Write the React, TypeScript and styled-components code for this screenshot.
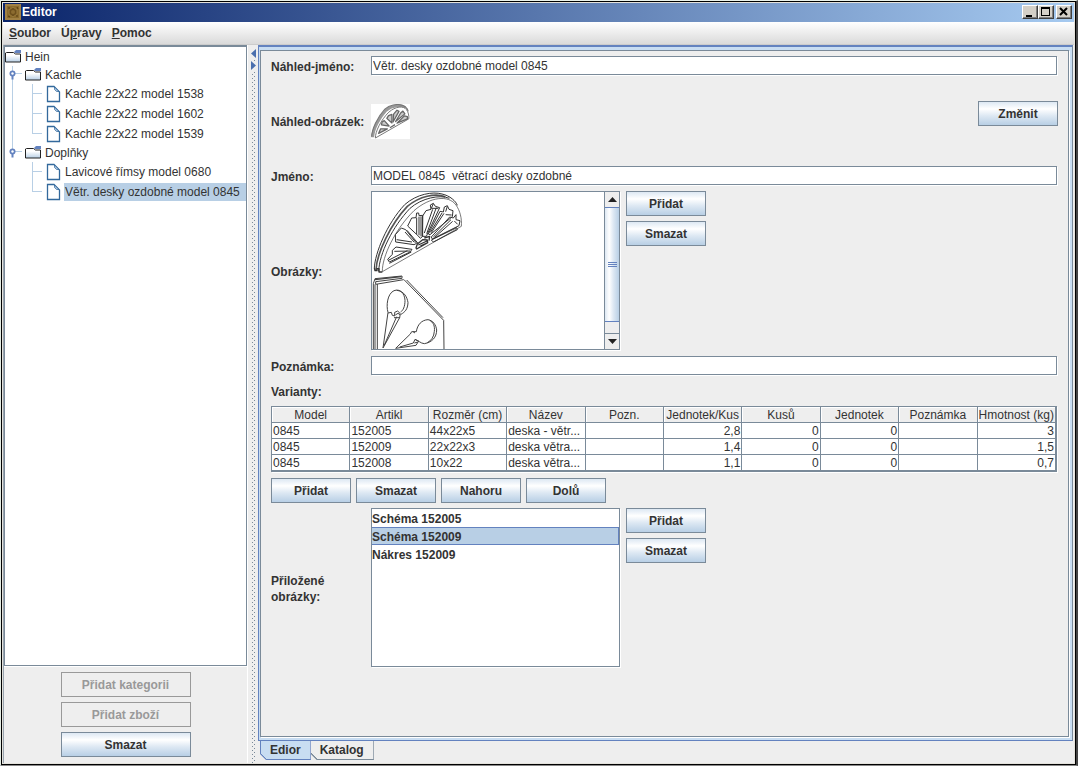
import React, { useState } from "react";
import styled, { createGlobalStyle, css } from "styled-components";

const steel = "#7a8a99";
const blue = "#6382bf";
const pale = "#c8ddf2";
const select = "#b8cfe5";
const panel = "#eeeeee";

const GlobalStyle = createGlobalStyle`
  * { box-sizing: border-box; }
  body { margin: 0; background: ${panel}; }
  body, button, input, table {
    font-family: "Liberation Sans", Arial, sans-serif;
    font-size: 12px;
    line-height: 16px;
    color: #333;
  }
`;

const Desktop = styled.div`
  display: flex;
  min-height: 100vh;
  border-style: solid;
  border-width: 1px 2px 1px 1px;
  border-color: #eaf2ea #444 #888 #e4ece4;
`;

const Window = styled.div`
  flex: 1;
  min-width: 0;
  display: flex;
  flex-direction: column;
  border: 1px solid #000;
  padding: 1px;
  background: #e4e2dc;
`;

const TitleBar = styled.header`
  display: flex;
  align-items: center;
  height: 19px;
  padding: 0 2px 1px;
  background: linear-gradient(90deg, #0a246a, #a6caf0);
  color: #fff;
  font-weight: bold;
`;

const Title = styled.h1`
  flex: 1;
  margin: 0 0 0 1px;
  font-size: 12px;
`;

const CaptionButton = styled.button<{ $apart?: boolean }>`
  display: flex;
  width: 16px;
  height: 14px;
  padding: 0;
  margin-left: ${(p) => (p.$apart ? "2px" : "0")};
  border: 1px solid;
  border-color: #fff #404040 #404040 #fff;
  box-shadow: inset -1px -1px 0 #808080;
  background: #d4d0c8;
`;

const MenuBar = styled.nav`
  display: flex;
  height: 23px;
  padding: 0 1px 1px;
  border-bottom: 1px solid #ccc;
  background: linear-gradient(#fff, #dadada);
`;

const MenuButton = styled.button`
  border: 0;
  padding: 0 5px;
  background: none;
  font-weight: bold;
`;

const Body = styled.main`
  flex: 1;
  display: grid;
  grid-template-columns: 245px 9px minmax(0, 1fr);
  background: ${panel};
`;

const Side = styled.aside`
  display: flex;
  flex-direction: column;
  border-left: 1px solid #99a5b0;
  border-right: 1px solid #fff;
`;

const TreeBox = styled.div`
  flex: 1;
  padding-top: 1px;
  border: 1px solid ${steel};
  border-top-width: 2px;
  box-shadow: 0 1px 0 #fff;
  background: #fff;
`;

const TreeList = styled.ul`
  list-style: none;
  margin: 0;
  padding: 0;
`;

const TreeRow = styled.div<{ $leaf?: boolean }>`
  display: flex;
  align-items: center;
  height: ${(p) => (p.$leaf ? "20px" : "18px")};
  svg { flex: none; }
`;

const TreeLabel = styled.span<{ $selected?: boolean }>`
  flex: ${(p) => (p.$selected ? "1" : "none")};
  margin-left: 3px;
  padding-left: 1px;
  line-height: 18px;
  white-space: nowrap;
  background: ${(p) => (p.$selected ? select : "transparent")};
`;

const SideActions = styled.div`
  display: flex;
  flex-direction: column;
  align-items: center;
  gap: 5px;
  padding: 6px 0;
`;

const Button = styled.button<{ $wide?: boolean }>`
  width: ${(p) => (p.$wide ? "130px" : "80px")};
  height: 25px;
  padding: 0;
  border: 1px solid ${steel};
  background: linear-gradient(#dde8f3, #fff 30%, #dde8f3 60%, ${select});
  font-weight: bold;
  &:disabled {
    border-color: #999;
    background: ${panel};
    color: #999;
  }
`;

const dot = "conic-gradient(from 270deg at 1px 1px, #7a8a99 90deg, transparent 0)";
const Splitter = styled.div`
  display: flex;
  flex-direction: column;
  align-items: center;
  gap: 2px;
  padding: 4px 2px 0 4px;
  background-image: ${dot}, ${dot};
  background-size: 4px 4px;
  background-position: 0 1px, 2px 3px;
  background-clip: content-box;
`;

const SplitButton = styled.button`
  flex: none;
  display: flex;
  width: 5px;
  height: 10px;
  padding: 0;
  border: 0;
  background: ${panel};
`;

const Content = styled.section`
  display: flex;
  flex-direction: column;
  min-width: 0;
  padding-left: 1px;
  padding-right: 1px;
`;

const TabFrame = styled.div`
  flex: 1;
  display: flex;
  padding: 3px 3px 3px 1px;
  border: 1px solid ${blue};
  border-top-width: 2px;
  border-right-color: ${steel};
  background: ${pale};
`;

const Form = styled.form`
  flex: 1;
  min-width: 0;
  padding: 5px 10px;
  border: 1px solid ${steel};
  box-shadow: 1px 1px 0 #fff;
  background: ${panel};
`;

const Row = styled.div<{ $height?: number; $gap?: number }>`
  display: grid;
  grid-template-columns: 100px minmax(0, 1fr);
  align-items: center;
  min-height: ${(p) => p.$height ?? 20}px;
  margin-bottom: ${(p) => p.$gap ?? 0}px;
`;

const labelText = css`
  padding-top: 2px;
  font-weight: bold;
  white-space: pre-line;
`;
const Label = styled.label`${labelText}`;
const Caption = styled.span`${labelText}`;

const Field = styled.input`
  width: calc(100% - 1px);
  height: 19px;
  margin-bottom: 1px;
  padding: 1px 1px 0;
  border: 1px solid ${steel};
  border-radius: 0;
  box-shadow: 1px 1px 0 #fff;
  background: #fff;
  outline: 0;
`;

const Spread = styled.div`
  display: flex;
  justify-content: space-between;
  align-items: flex-start;
  min-height: 40px;
`;

const Thumb = styled.div`
  display: flex;
  margin-top: 3px;
  background: #fff;
`;

const Listing = styled.div`
  display: flex;
  align-items: flex-start;
  gap: 6px;
`;

const ListBox = styled.div`
  display: flex;
  width: 249px;
  height: 159px;
  margin-bottom: 1px;
  border: 1px solid ${steel};
  box-shadow: 1px 1px 0 #fff;
  background: #fff;
`;

const Pictures = styled.div`
  flex: 1;
  svg { display: block; }
`;

const Stack = styled.div`
  display: flex;
  flex-direction: column;
  gap: 5px;
`;

const ScrollBar = styled.div`
  display: flex;
  flex-direction: column;
  width: 15px;
  border-left: 1px solid ${steel};
  background: ${panel};
`;

const ScrollButton = styled.button`
  display: flex;
  align-items: center;
  justify-content: center;
  height: 15px;
  padding: 0;
  border: 0;
  background: ${panel};
`;

const ScrollTrack = styled.div`
  flex: 1;
  padding-bottom: 11px;
  border-bottom: 1px solid ${steel};
  display: flex;
`;

const ScrollThumb = styled.div`
  flex: 1;
  display: flex;
  align-items: center;
  justify-content: center;
  border: 1px solid ${blue};
  border-width: 1px 0;
  background: linear-gradient(90deg, #dde8f3, #fff 30%, #dde8f3 60%, ${select});
`;

const Options = styled.ul`
  flex: 1;
  list-style: none;
  margin: 0;
  padding: 0;
  font-weight: bold;
`;

const Option = styled.li<{ $selected: boolean }>`
  height: 18px;
  padding-top: 1px;
  border: 1px solid ${(p) => (p.$selected ? blue : "transparent")};
  border-left-width: 0;
  background: ${(p) => (p.$selected ? select : "transparent")};
`;

const Heading = styled.h2`
  margin: 0;
  padding-top: 2px;
  font-size: 12px;
  line-height: 28px;
`;

const Table = styled.table`
  width: calc(100% - 1px);
  table-layout: fixed;
  border-collapse: separate;
  border-spacing: 0;
  border: 1px solid ${steel};
  box-shadow: 1px 1px 0 #fff;
  background: #fff;
`;

const HeadCell = styled.th`
  height: 16px;
  padding: 1px 0 0;
  overflow: hidden;
  border-right: 1px solid ${steel};
  border-bottom: 1px solid ${steel};
  background: ${panel};
  box-shadow: inset 1px 1px 0 #fff;
  font-weight: normal;
  line-height: 14px;
  text-align: center;
  white-space: nowrap;
`;

const Cell = styled.td<{ $number: boolean }>`
  height: 16px;
  padding: 1px 1px 0;
  overflow: hidden;
  border-right: 1px solid ${steel};
  border-bottom: 1px solid ${steel};
  line-height: 14px;
  text-align: ${(p) => (p.$number ? "right" : "left")};
  white-space: nowrap;
`;

const ButtonRow = styled.div`
  display: flex;
  gap: 5px;
  padding: 6px 0 5px;
`;

const Tabs = styled.div`
  display: flex;
  height: 22px;
  padding-left: 2px;
`;

const Tab = styled.button<{ $active: boolean }>`
  height: 19px;
  padding: 0 9px;
  border: 1px solid ${(p) => (p.$active ? blue : steel)};
  border-top: 0;
  border-left-width: ${(p) => (p.$active ? "1px" : "0")};
  background: linear-gradient(45deg, ${(p) => (p.$active ? blue : steel)} 5px, ${(p) => (p.$active ? pale : panel)} 5px) border-box;
  clip-path: polygon(0 0, 100% 0, 100% 100%, 6px 100%, 0 calc(100% - 6px));
  font-weight: bold;
`;

const FolderIcon = () => (
  <svg width="16" height="16" viewBox="0 0 16 16" aria-hidden="true">
    <defs>
      <linearGradient id="folder" x1="0" y1="0" x2="0" y2="1">
        <stop offset="0.3" stopColor="#fff" />
        <stop offset="1" stopColor={select} />
      </linearGradient>
    </defs>
    <path d="M.5 13V4L1.500 3.500H8.500L10.500 5H15.500V13Z" fill="url(#folder)" stroke="#222" />
    <path d="M9 3L11 1H16V4H10Z" fill={blue} />
  </svg>
);

const FileIcon = () => (
  <svg width="16" height="18" viewBox="0 0 16 18" aria-hidden="true">
    <path d="M2.500 1.500H9L14.500 7V16.500H2.500Z" fill="#fff" stroke="#33699c" strokeWidth="1.300" />
    <path d="M9.500 2V4.500L11.500 6.500H14L9.500 2Z" fill="#a9c4de" stroke="#33699c" strokeWidth="0.700" />
  </svg>
);

type GuideKind = "handle" | "lastHandle" | "through" | "branch" | "last" | "none";
const Guide = ({ kind, height }: { kind: GuideKind; height: number }) => {
  const mid = height / 2 - 0.5;
  const handle = kind === "handle" || kind === "lastHandle";
  const x = handle || kind === "through" ? 7 : 7;
  const end = kind === "last" || kind === "lastHandle" ? mid : height;
  return (
    <svg width="20" height={height} aria-hidden="true">
      {kind !== "none" && <rect x={x} width="1" height={end + 0.5} fill={select} />}
      {(kind === "branch" || kind === "last") && <rect x={x} y={mid - 0.5} width="10" height="1" fill={select} />}
      {handle && (
        <>
          <rect x="10" y={mid - 1.5} width="7" height="1" fill={select} />
          <path d={`M7.500 ${mid}V${mid + 5}`} stroke={blue} strokeWidth="2" />
          <circle cx="7.500" cy={mid - 1} r="3" fill={blue} />
          <circle cx="7.500" cy={mid - 1} r="1.200" fill="#fff" />
        </>
      )}
    </svg>
  );
};

const FanShapes = () => (
  <g fill="none" stroke="#333" strokeWidth="3" strokeLinejoin="round">
    <path d="M13 234C15 190 50 102 104 44C140 12 188 4 216 12C240 17 258 34 262 46" />
    <path d="M18 240C20 190 62 102 112 49C150 18 195 9 226 20" strokeWidth="5" stroke="#555" />
    <path d="M26 244C28 190 68 110 120 55C155 24 210 13 238 25" />
    <path d="M13 234L15 242L21 242V236L27 236V246H37" strokeWidth="4" />
    <path d="M37 245C36 200 75 118 132 62C180 20 236 14 258 45C270 62 276 85 274 109L37 245Z" fill="#fff" strokeWidth="2" />
    <path d="M53 208L67 193V181L78 171L126 178L120 186L58 216ZM55 211L112 182M58 220L124 186M73 184L120 183" />
    <path d="M77 156L76 134L94 114L107 119L140 160L132 164L77 156ZM105 126L133 157M80 149L126 156M111 121L144 160" />
    <path d="M113 108L125 84L138 83L140 69H146L147 77L158 76V139L151 145L145 138L113 108ZM140 83V132M147 80V136M153 79V139" />
    <path d="M157 139L158 78L168 62L183 58L181 45L190 40L196 49L209 53L169 139ZM188 58L163 129M199 53L170 131M190 41L184 55L205 55" />
    <path d="M175 132L210 64L220 66L223 51L232 47L237 58L249 62L247 80L180 134ZM216 69L181 127M222 70L184 128M227 74L245 75M232 49L227 65" />
    <path d="M184 141L239 81L250 84L258 74V89L270 92L267 107L187 147ZM243 89L190 141M248 94L194 142M253 93L263 103" />
    <path d="M138 174L142 162L158 149L172 150L173 158L140 177ZM145 165L171 153M163 144L179 139L177 152M151 168L174 158" strokeWidth="4" />
    <path d="M184 150L260 113L262 119L190 156Z" />
  </g>
);

const ThumbShapes = () => (
  <g fill="none" stroke="#777" strokeLinejoin="round">
    <path d="M18 240C20 185 62 102 112 49C150 15 215 5 250 30" stroke="#999" strokeWidth="20" />
    <path d="M10 236C12 185 50 98 104 40C140 10 188 4 216 10C240 15 262 30 270 56" strokeWidth="8" />
    <path d="M37 245C36 200 75 118 132 62C180 20 236 14 258 45C270 62 276 85 274 109L37 245Z" fill="#fff" strokeWidth="7" />
    <g fill="#ccc" stroke="#666" strokeWidth="9">
      <path d="M60 212L74 180L122 180Z" />
      <path d="M80 152L84 132L100 122L134 160Z" />
      <path d="M118 106L130 86L154 78V138Z" />
      <path d="M162 132L166 76L190 48L204 56Z" />
      <path d="M180 128L216 68L232 54L246 74Z" />
      <path d="M190 140L242 88L264 94V110Z" />
      <path d="M140 172L176 150" />
    </g>
  </g>
);

const PanelShapes = () => (
  <g fill="none" stroke="#444" strokeWidth="3">
    <path d="M10 232V35L15 20L96 12L96 19L17 29V37L101 23" />
    <path d="M15 23L94 14" strokeWidth="4" />
    <path d="M15 37V232M22 36V232M102 23L221 145L222 232M110 24L219 137" />
    <path d="M54 121C48 101 52 65 72 56C91 49 104 65 105 85C105 105 99 115 92 120M80 55C103 57 112 77 114 92C113 112 105 120 93 127" />
    <path d="M54 121L39 228L89 137L91 125L83 117L74 121V132L67 130L64 121L54 123M43 219L80 134M72 137H90M76 129L84 124L90 128" />
    <path d="M139 179C142 158 155 144 174 143C190 146 198 159 200 174C200 196 186 211 163 215C151 214 146 205 137 204M179 145C190 151 195 162 193 178C192 194 184 206 172 212" />
    <path d="M139 179L125 179L121 186L77 229L138 220L146 207L135 202L130 213L89 225M133 213L144 210M129 179L135 183" />
  </g>
);

type LeafData = { label: string; selected?: boolean };
const groups: { label: string; items: LeafData[] }[] = [
  {
    label: "Kachle",
    items: [
      { label: "Kachle 22x22 model 1538" },
      { label: "Kachle 22x22 model 1602" },
      { label: "Kachle 22x22 model 1539" },
    ],
  },
  {
    label: "Doplňky",
    items: [
      { label: "Lavicové římsy model 0680" },
      { label: "Větr. desky ozdobné model 0845", selected: true },
    ],
  },
];

const columns = ["Model", "Artikl", "Rozměr (cm)", "Název", "Pozn.", "Jednotek/Kus", "Kusů", "Jednotek", "Poznámka", "Hmotnost (kg)"];
const rows = [
  ["0845", "152005", "44x22x5", "deska - větr...", "", "2,8", "0", "0", "", "3"],
  ["0845", "152009", "22x22x3", "deska větra...", "", "1,4", "0", "0", "", "1,5"],
  ["0845", "152008", "10x22", "deska větra...", "", "1,1", "0", "0", "", "0,7"],
];
const attachments = ["Schéma 152005", "Schéma 152009", "Nákres 152009"];

const Tree = () => (
  <TreeBox>
    <TreeList>
      <li>
        <TreeRow><FolderIcon /><TreeLabel>Hein</TreeLabel></TreeRow>
        <TreeList>
          {groups.map((group, g) => {
            const last = g === groups.length - 1;
            return (
              <li key={group.label}>
                <TreeRow>
                  <Guide kind={last ? "lastHandle" : "handle"} height={18} />
                  <FolderIcon />
                  <TreeLabel>{group.label}</TreeLabel>
                </TreeRow>
                <TreeList>
                  {group.items.map((item, i) => (
                    <li key={item.label}>
                      <TreeRow $leaf>
                        <Guide kind={last ? "none" : "through"} height={20} />
                        <Guide kind={i === group.items.length - 1 ? "last" : "branch"} height={20} />
                        <FileIcon />
                        <TreeLabel $selected={item.selected}>{item.label}</TreeLabel>
                      </TreeRow>
                    </li>
                  ))}
                </TreeList>
              </li>
            );
          })}
        </TreeList>
      </li>
    </TreeList>
  </TreeBox>
);

const PictureList = () => (
  <ListBox aria-labelledby="pictures" role="group">
    <Pictures>
      <svg width="96" height="157" viewBox="6 6 288 471" aria-hidden="true">
        <FanShapes />
        <g transform="translate(0 246)"><PanelShapes /></g>
      </svg>
    </Pictures>
    <ScrollBar>
      <ScrollButton type="button" aria-label="Nahoru">
        <svg width="9" height="5"><path d="M0 5L4.500 0L9 5Z" fill="#222" /></svg>
      </ScrollButton>
      <ScrollTrack>
        <ScrollThumb>
          <svg width="9" height="5"><path d="M0 .5H9M0 2.500H9M0 4.500H9" stroke={blue} /></svg>
        </ScrollThumb>
      </ScrollTrack>
      <ScrollButton type="button" aria-label="Dolů">
        <svg width="9" height="5"><path d="M0 0L4.500 5L9 0Z" fill="#222" /></svg>
      </ScrollButton>
    </ScrollBar>
  </ListBox>
);

export default function App() {
  const [chosen, setChosen] = useState(1);
  const [tab, setTab] = useState(0);
  return (
    <>
      <GlobalStyle />
      <Desktop>
        <Window>
          <TitleBar>
            <svg width="16" height="16" viewBox="0 0 16 16" aria-hidden="true">
              <rect width="16" height="16" fill="#8a6a2c" />
              <path d="M1 1H15V15H1Z" fill="none" stroke="#a08044" strokeWidth="2" />
              <path d="M8 3L12 6V10L8 13L4 10V6Z" fill="#6e501d" stroke="#9a7a3c" />
              <circle cx="8" cy="8" r="2" fill="#8c6c30" />
              <path d="M3 4H5M11 12H13M3 12L5 13M12 3L13 5" stroke="#563b12" />
            </svg>
            <Title>Editor</Title>
            <CaptionButton aria-label="Minimalizovat">
              <svg width="14" height="12"><rect x="3" y="9" width="6" height="2" /></svg>
            </CaptionButton>
            <CaptionButton aria-label="Maximalizovat">
              <svg width="14" height="12"><path d="M2 1H11V10H2ZM3 3V9H10V3Z" fillRule="evenodd" /></svg>
            </CaptionButton>
            <CaptionButton aria-label="Zavřít" $apart>
              <svg width="14" height="12"><path d="M3 2L10 9M10 2L3 9" stroke="#000" strokeWidth="2" /></svg>
            </CaptionButton>
          </TitleBar>
          <MenuBar>
            <MenuButton><u>S</u>oubor</MenuButton>
            <MenuButton>Ú<u>p</u>ravy</MenuButton>
            <MenuButton><u>P</u>omoc</MenuButton>
          </MenuBar>
          <Body>
            <Side>
              <Tree />
              <SideActions>
                <Button $wide disabled>Přidat kategorii</Button>
                <Button $wide disabled>Přidat zboží</Button>
                <Button $wide>Smazat</Button>
              </SideActions>
            </Side>
            <Splitter>
              <SplitButton aria-label="Sbalit vlevo">
                <svg width="5" height="9"><path d="M5 0V9L0 4.500Z" fill="#4a6fae" /></svg>
              </SplitButton>
              <SplitButton aria-label="Sbalit vpravo">
                <svg width="5" height="9"><path d="M0 0V9L5 4.500Z" fill="#4a6fae" /></svg>
              </SplitButton>
            </Splitter>
            <Content>
              <TabFrame>
                <Form onSubmit={(e) => e.preventDefault()}>
                  <Row>
                    <Label htmlFor="preview-name">Náhled-jméno:</Label>
                    <Field id="preview-name" defaultValue="Větr. desky ozdobné model 0845" />
                  </Row>
                  <Row $height={90}>
                    <Caption>Náhled-obrázek:</Caption>
                    <Spread>
                      <Thumb>
                        <svg width="39" height="35" viewBox="6 4 276 248" aria-hidden="true"><ThumbShapes /></svg>
                      </Thumb>
                      <Button type="button">Změnit</Button>
                    </Spread>
                  </Row>
                  <Row $gap={5}>
                    <Label htmlFor="name">Jméno:</Label>
                    <Field id="name" defaultValue="MODEL 0845  větrací desky ozdobné" />
                  </Row>
                  <Row $gap={5}>
                    <Caption id="pictures">Obrázky:</Caption>
                    <Listing>
                      <PictureList />
                      <Stack>
                        <Button type="button">Přidat</Button>
                        <Button type="button">Smazat</Button>
                      </Stack>
                    </Listing>
                  </Row>
                  <Row>
                    <Label htmlFor="note">Poznámka:</Label>
                    <Field id="note" />
                  </Row>
                  <Heading id="variants">Varianty:</Heading>
                  <Table aria-labelledby="variants">
                    <thead>
                      <tr>{columns.map((c) => <HeadCell key={c} scope="col">{c}</HeadCell>)}</tr>
                    </thead>
                    <tbody>
                      {rows.map((r) => (
                        <tr key={r[1]}>{r.map((v, i) => <Cell key={i} $number={i > 4}>{v}</Cell>)}</tr>
                      ))}
                    </tbody>
                  </Table>
                  <ButtonRow>
                    <Button type="button">Přidat</Button>
                    <Button type="button">Smazat</Button>
                    <Button type="button">Nahoru</Button>
                    <Button type="button">Dolů</Button>
                  </ButtonRow>
                  <Row>
                    <Caption id="attached">{"Přiložené\nobrázky:"}</Caption>
                    <Listing>
                      <ListBox>
                        <Options role="listbox" aria-labelledby="attached">
                          {attachments.map((a, i) => (
                            <Option key={a} role="option" aria-selected={i === chosen} $selected={i === chosen} onClick={() => setChosen(i)}>{a}</Option>
                          ))}
                        </Options>
                      </ListBox>
                      <Stack>
                        <Button type="button">Přidat</Button>
                        <Button type="button">Smazat</Button>
                      </Stack>
                    </Listing>
                  </Row>
                </Form>
              </TabFrame>
              <Tabs role="tablist">
                {["Edior", "Katalog"].map((t, i) => (
                  <Tab key={t} role="tab" aria-selected={i === tab} $active={i === tab} onClick={() => setTab(i)}>{t}</Tab>
                ))}
              </Tabs>
            </Content>
          </Body>
        </Window>
      </Desktop>
    </>
  );
}
